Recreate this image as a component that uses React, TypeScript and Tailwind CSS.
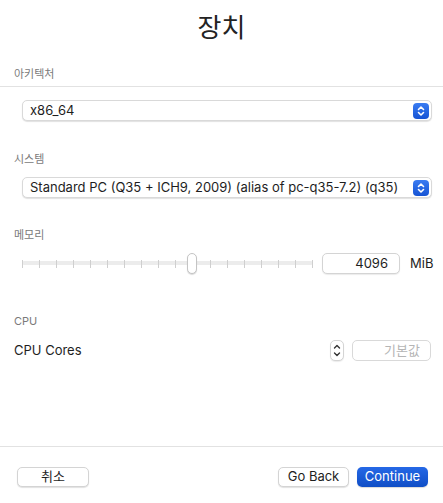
import React from "react";

const font = { fontFamily: 'Inter, "Noto Sans CJK KR", sans-serif' };

function BlueStepper() {
  return (
    <div className="w-[16px] h-[16px] rounded-[4px] bg-gradient-to-b from-[#3a7cf2] to-[#1553d4] flex items-center justify-center">
      <svg width="10" height="12" viewBox="0 0 10 12" fill="none" stroke="white" strokeWidth="1.6" strokeLinecap="round" strokeLinejoin="round">
        <path d="M2.5 4.5 L5 2 L7.5 4.5" />
        <path d="M2.5 7.5 L5 10 L7.5 7.5" />
      </svg>
    </div>
  );
}

function Popup({ text }: { text: string }) {
  return (
    <div className="ml-[22px] mr-[11px] h-[21px] rounded-[5px] bg-white border border-[#d9d9d9] shadow-[0_1px_1px_rgba(0,0,0,0.12)] flex items-center pl-[7px] pr-[2px]">
      <span className="flex-1 text-[13px] text-[#1e1e1e] leading-none whitespace-nowrap">{text}</span>
      <BlueStepper />
    </div>
  );
}

function Label({ text, className = "" }: { text: string; className?: string }) {
  return (
    <div className={"pl-[14px] h-[14px] leading-[14px] text-[11px] text-[#7a7a7a] " + className}>{text}</div>
  );
}

export default function App() {
  const ticks = Array.from({ length: 18 });
  return (
    <div className="w-[443px] h-[503px] bg-white flex flex-col text-[#1e1e1e]" style={font}>
      <div className="h-[54px] flex items-center justify-center text-[26px] text-[#232323]">장치</div>
      <Label text="아키텍처" className="mt-[13px]" />
      <div className="mt-[5px] h-px bg-[#e2e2e2]" />
      <div className="mt-[13px]">
        <Popup text="x86_64" />
      </div>
      <Label text="시스템" className="mt-[31px]" />
      <div className="mt-[11px]">
        <Popup text="Standard PC (Q35 + ICH9, 2009) (alias of pc-q35-7.2) (q35)" />
      </div>
      <Label text="메모리" className="mt-[30px]" />
      <div className="mt-[11px] h-[21px] flex items-center">
        <div className="ml-[22px] w-[291px] h-[21px] relative flex items-center">
          <div className="absolute left-0 right-0 top-[8px] h-[4px] bg-[#ececec] rounded-full" />
          <div className="relative w-full flex justify-between items-center">
            {ticks.map((_, i) => (
              <div key={i} className="w-px h-[8px] bg-[#cfcfcf]" />
            ))}
          </div>
          <div className="absolute left-[165px] top-0 w-[10px] h-[21px] rounded-full bg-white border border-[#c4c4c4] shadow-[0_1px_1px_rgba(0,0,0,0.15)]" />
        </div>
        <div className="ml-[9px] w-[78px] h-[21px] rounded-[5px] border border-[#d4d4d4] bg-white shadow-[0_1px_1px_rgba(0,0,0,0.08)] flex items-center justify-end pr-[11px] text-[13px]">
          4096
        </div>
        <div className="ml-[10px] text-[13px]">MiB</div>
      </div>
      <Label text="CPU" className="mt-[40px]" />
      <div className="mt-[12px] h-[21px] flex items-center">
        <div className="pl-[14px] flex-1 text-[13px]">CPU Cores</div>
        <div className="w-[14px] h-[21px] rounded-[5px] border border-[#d4d4d4] bg-white flex flex-col items-center justify-center shadow-[0_1px_1px_rgba(0,0,0,0.08)]">
          <svg width="8" height="15" viewBox="0 0 8 15" fill="none" stroke="#333" strokeWidth="1.4" strokeLinecap="round" strokeLinejoin="round">
            <path d="M1.5 5 L4 2.5 L6.5 5" />
            <path d="M1.5 10 L4 12.5 L6.5 10" />
          </svg>
        </div>
        <div className="ml-[8px] mr-[12px] w-[79px] h-[21px] rounded-[5px] border border-[#d9d9d9] bg-white flex items-center justify-end pr-[10px] text-[13px] text-[#b5b5b5]">
          기본값
        </div>
      </div>
      <div className="flex-1" />
      <div className="h-px bg-[#e2e2e2]" />
      <div className="pt-[20px] pb-[16px] flex items-center">
        <div className="ml-[17px] w-[72px] h-[20px] rounded-[5px] bg-white border border-[#d4d4d4] shadow-[0_1px_1px_rgba(0,0,0,0.12)] flex items-center justify-center text-[13px]">
          취소
        </div>
        <div className="flex-1" />
        <div className="w-[71px] h-[20px] rounded-[5px] bg-white border border-[#d4d4d4] shadow-[0_1px_1px_rgba(0,0,0,0.12)] flex items-center justify-center text-[13px]">
          Go Back
        </div>
        <div className="ml-[8px] mr-[15px] w-[71px] h-[20px] rounded-[5px] bg-gradient-to-b from-[#2568e6] to-[#0f4ec6] flex items-center justify-center text-[13px] text-white shadow-[0_1px_1px_rgba(0,0,0,0.15)]">
          Continue
        </div>
      </div>
    </div>
  );
}
